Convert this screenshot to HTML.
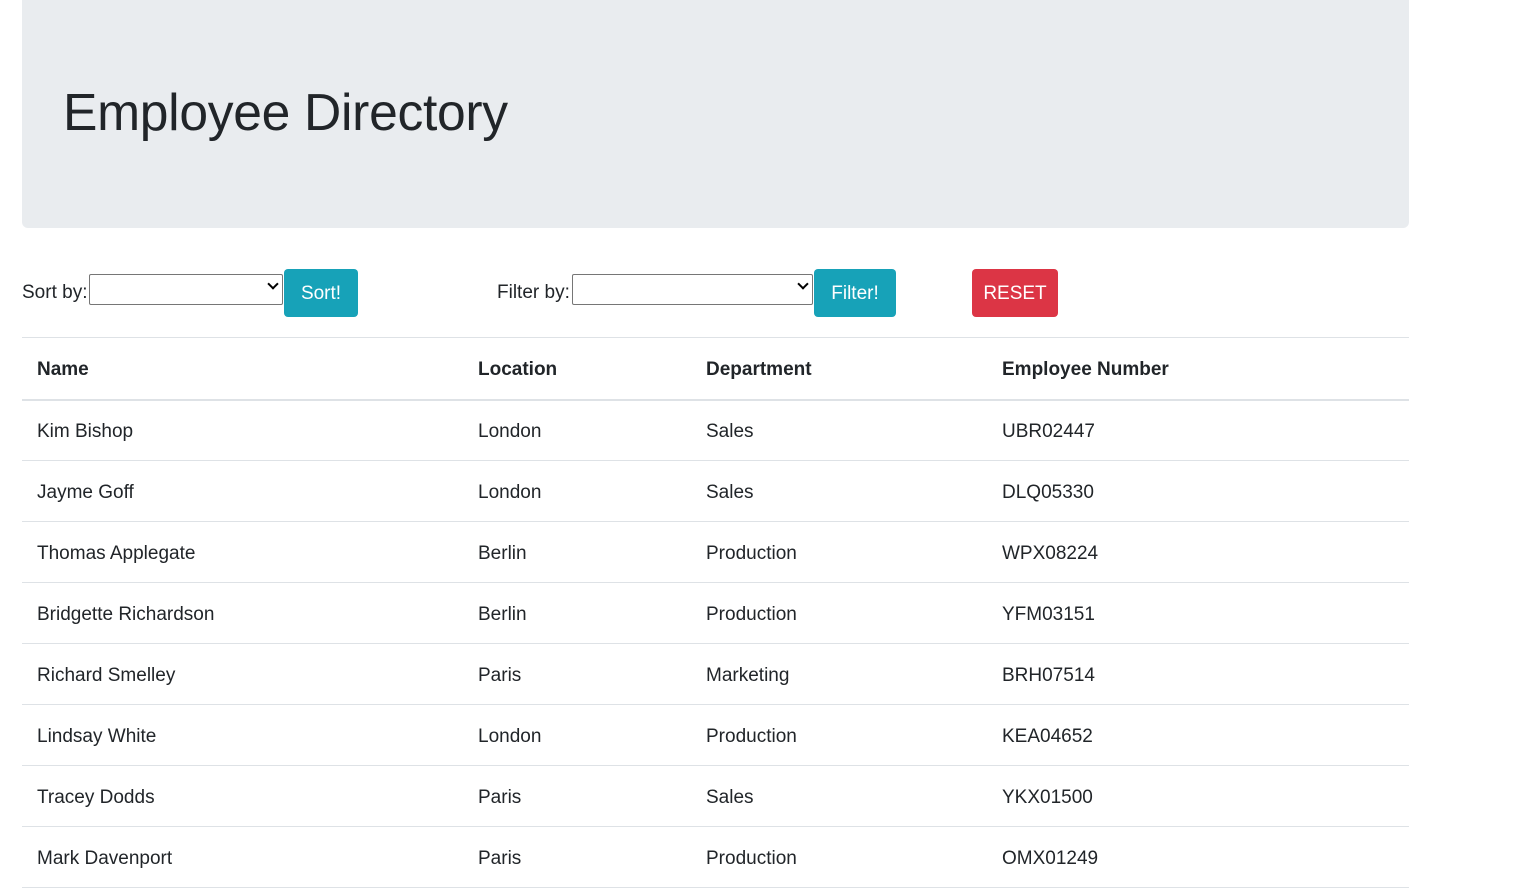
<!DOCTYPE html>
<html><head><style>
body{margin:0;font-family:"Liberation Sans",sans-serif;color:#212529;background:#fff;font-size:19px}
.jb{position:absolute;left:22px;top:0;width:1387px;height:228px;background:#e9ecef;border-radius:0 0 6px 6px}
.jb h1{position:absolute;left:41px;top:82px;margin:0;font-size:51.6px;font-weight:500;letter-spacing:-0.3px}
.a{position:absolute}
.sel{position:absolute;border:1px solid #767676;background:#fff;height:29px;border-radius:2px}
.sel span{position:absolute;right:5px;top:5px;width:6px;height:6px;border-right:2px solid #000;border-bottom:2px solid #000;transform:rotate(45deg)}
.btn{position:absolute;color:#fff;border-radius:4px;text-align:center;line-height:50px;height:48px;font-size:19px}
table{position:absolute;left:22px;top:337px;width:1387px;border-collapse:collapse}
td,th{height:61px;border-top:1px solid #dee2e6;padding:4px 15px 0;box-sizing:border-box;text-align:left;font-size:19px}
th{height:62px;border-bottom:2px solid #dee2e6;font-weight:bold}
tr:last-child td{border-bottom:1px solid #dee2e6}
</style></head><body>
<div class="jb"><h1>Employee Directory</h1></div>
<div class="a" style="left:22px;top:282px">Sort by:</div>
<div class="sel" style="left:89px;top:274px;width:192px"><span></span></div>
<div class="btn" style="left:284px;top:269px;width:74px;background:#17a2b8">Sort!</div>
<div class="a" style="left:497px;top:282px">Filter by:</div>
<div class="sel" style="left:572px;top:274px;width:239px"><span></span></div>
<div class="btn" style="left:814px;top:269px;width:82px;background:#17a2b8">Filter!</div>
<div class="btn" style="left:972px;top:269px;width:86px;background:#dc3545">RESET</div>
<table>
<tr><th style="width:441px">Name</th><th style="width:228px">Location</th><th style="width:296px">Department</th><th>Employee Number</th></tr>
<tr><td>Kim Bishop</td><td>London</td><td>Sales</td><td>UBR02447</td></tr>
<tr><td>Jayme Goff</td><td>London</td><td>Sales</td><td>DLQ05330</td></tr>
<tr><td>Thomas Applegate</td><td>Berlin</td><td>Production</td><td>WPX08224</td></tr>
<tr><td>Bridgette Richardson</td><td>Berlin</td><td>Production</td><td>YFM03151</td></tr>
<tr><td>Richard Smelley</td><td>Paris</td><td>Marketing</td><td>BRH07514</td></tr>
<tr><td>Lindsay White</td><td>London</td><td>Production</td><td>KEA04652</td></tr>
<tr><td>Tracey Dodds</td><td>Paris</td><td>Sales</td><td>YKX01500</td></tr>
<tr><td>Mark Davenport</td><td>Paris</td><td>Production</td><td>OMX01249</td></tr>
</table>
</body></html>
